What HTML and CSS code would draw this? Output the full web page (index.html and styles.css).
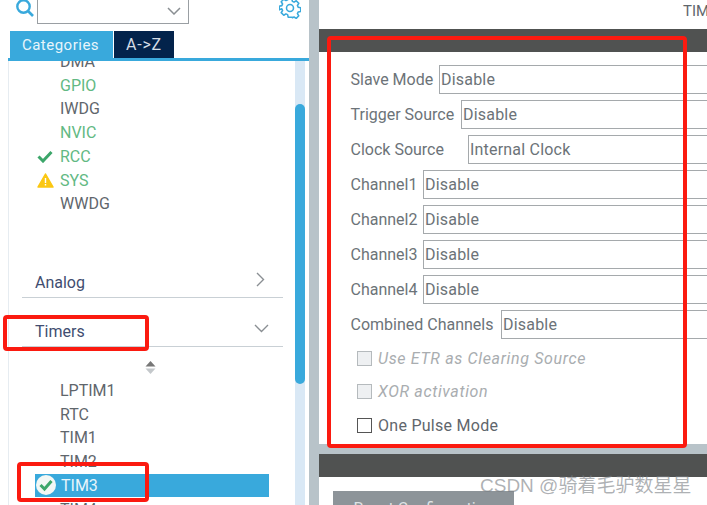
FILE: index.html
```html
<!DOCTYPE html>
<html lang="en">
<head>
    <meta charset="UTF-8">
    <title>TIM3 Mode and Configuration</title>
    <link rel="stylesheet" href="styles.css">
</head>
<body>
<div id="app">
    <div class="left">
        <div class="search">
            <svg class="search-icon" width="20" height="20" viewBox="0 0 20 20"><circle cx="8.5" cy="7.5" r="6.2" fill="none" stroke="#39a9dc" stroke-width="2.4"/><path d="M13 12l5 5" stroke="#39a9dc" stroke-width="2.6" fill="none"/></svg>
            <div class="search-box">
                <svg width="14" height="8" viewBox="0 0 14 8"><path d="M1 1l6 6 6-6" fill="none" stroke="#8a8f93" stroke-width="1.5"/></svg>
            </div>
            <svg class="gear" width="22" height="22" viewBox="0 0 24 24"><path d="M10 2h4l.6 2.8 1.8.8 2.4-1.5 2.8 2.8-1.5 2.4.8 1.8 2.8.6v4l-2.8.6-.8 1.8 1.5 2.4-2.8 2.8-2.4-1.5-1.8.8L14 22h-4l-.6-2.8-1.8-.8-2.4 1.5-2.8-2.8 1.5-2.4-.8-1.8L.3 14v-4l2.8-.6.8-1.8-1.5-2.4 2.8-2.8 2.4 1.5 1.8-.8z" fill="none" stroke="#39a9dc" stroke-width="1.7" stroke-linejoin="round"/><circle cx="12" cy="12" r="3.8" fill="none" stroke="#39a9dc" stroke-width="1.7"/></svg>
        </div>
        <div class="tabs">
            <span class="tab active">Categories</span>
            <span class="tab">A-&gt;Z</span>
        </div>
        <div class="tab-line"></div>
        <div class="tree">
            <div class="tree-body">
                <ul class="items first">
                    <li><i class="slot"></i>DMA</li>
                    <li class="ok"><i class="slot"></i>GPIO</li>
                    <li><i class="slot"></i>IWDG</li>
                    <li class="ok"><i class="slot"></i>NVIC</li>
                    <li class="ok"><i class="slot"><svg width="16" height="13" viewBox="0 0 16 13"><path d="M1.5 6.5l4.5 4.5 8.5-9" fill="none" stroke="#3ca66a" stroke-width="3"/></svg></i>RCC</li>
                    <li class="ok"><i class="slot"><svg width="17" height="15" viewBox="0 0 17 15"><path d="M8.5 1L16 14H1z" fill="#fbc712" stroke="#fbc712" stroke-width="1.5" stroke-linejoin="round"/><path d="M8.5 5v5M8.5 11v1.6" stroke="#fff" stroke-width="1.4"/></svg></i>SYS</li>
                    <li><i class="slot"></i>WWDG</li>
                </ul>
                <div class="group analog">Analog
                    <svg width="9" height="15" viewBox="0 0 9 15"><path d="M1 1l6.5 6.5L1 14" fill="none" stroke="#8a8f93" stroke-width="1.4"/></svg>
                </div>
                <div class="group timers">Timers
                    <svg width="15" height="9" viewBox="0 0 15 9"><path d="M1 1l6.5 6.5L14 1" fill="none" stroke="#8a8f93" stroke-width="1.4"/></svg>
                </div>
                <div class="sort">
                    <svg width="11" height="13" viewBox="0 0 11 13"><path d="M5.5 0L10.5 5.500H.5z" fill="#777"/><path d="M.5 7.500h10L5.500 13z" fill="#c4c8cb"/></svg>
                </div>
                <ul class="items">
                    <li><i class="slot"></i>LPTIM1</li>
                    <li><i class="slot"></i>RTC</li>
                    <li><i class="slot"></i>TIM1</li>
                    <li><i class="slot"></i>TIM2</li>
                    <li class="selected"><i class="slot"><svg width="20" height="20" viewBox="0 0 20 20"><circle cx="10" cy="10" r="10" fill="#f2f7f5"/><path d="M4.500 10l4 4 7-8" fill="none" stroke="#3ca66a" stroke-width="3"/></svg></i>TIM3</li>
                    <li><i class="slot"></i>TIM4</li>
                </ul>
            </div>
            <div class="scrollbar"><div class="thumb"></div></div>
        </div>
    </div>
    <div class="divider"></div>
    <div class="right">
        <div class="title">TIM3 Mode and Configuration</div>
        <div class="bar"></div>
        <div class="form">
            <div class="row"><label class="w-slave">Slave Mode</label><div class="select">Disable</div></div>
            <div class="row"><label class="w-trigger">Trigger Source</label><div class="select">Disable</div></div>
            <div class="row"><label class="w-clock">Clock Source</label><div class="select">Internal Clock</div></div>
            <div class="row"><label class="w-channel">Channel1</label><div class="select">Disable</div></div>
            <div class="row"><label class="w-channel">Channel2</label><div class="select">Disable</div></div>
            <div class="row"><label class="w-channel">Channel3</label><div class="select">Disable</div></div>
            <div class="row"><label class="w-channel">Channel4</label><div class="select">Disable</div></div>
            <div class="row last"><label class="w-combined">Combined Channels</label><div class="select">Disable</div></div>
            <div class="check off"><span class="box"></span>Use ETR as Clearing Source</div>
            <div class="check off"><span class="box"></span>XOR activation</div>
            <div class="check"><span class="box"></span>One Pulse Mode</div>
        </div>
        <div class="bar second"></div>
        <div class="footer"><span class="reset">Reset Configuration</span></div>
    </div>
</div>
<div class="mark mark-form"></div>
<div class="mark mark-timers"></div>
<div class="mark mark-tim3"></div>
<div class="watermark">CSDN @骑着毛驴数星星</div>
</body>
</html>
```

FILE: styles.css
```css
*{
    margin: 0;
    padding: 0;
    box-sizing: border-box;
}
html,body{
    height: 505px;
    overflow: hidden;
}
body{
    font-family: Roboto, "Liberation Sans", sans-serif;
    font-size: 16px;
    color: #5f666c;
    background: #fff;
    position: relative;
}
li{
    list-style: none;
}
#app{
    display: flex;
    height: 505px;
}

/* left pane */
.left{
    width: 309px;
    height: 505px;
    overflow: hidden;
}
.search{
    display: flex;
    height: 31px;
    padding-left: 15px;
    align-items: flex-start;
}
.search-icon{
    margin-top: -1px;
    flex: none;
}
.search-box{
    width: 152px;
    height: 25px;
    margin-left: 2px;
    margin-top: -1px;
    border: 1px solid #9a9fa3;
    border-width: 0 1px 1px 1px;
    display: flex;
    justify-content: flex-end;
    align-items: center;
    padding-right: 7px;
}
.gear{
    margin-left: 90px;
    margin-top: -3px;
}
.tabs{
    display: flex;
    height: 27px;
    padding-left: 10px;
    gap: 1px;
}
.tab{
    width: 60px;
    line-height: 28px;
    text-align: center;
    background: #03234b;
    color: #d5dde6;
    letter-spacing: 0.8px;
}
.tab.active{
    width: 103px;
    padding-right: 2px;
    background: #39a9dc;
    color: #e8f5fb;
    font-size: 15px;
    letter-spacing: 0.5px;
}
.tab-line{
    height: 3px;
    margin-left: 8px;
    background: #39a9dc;
}
.tree{
    display: flex;
    height: 444px;
    margin-left: 8px;
    border-left: 1px solid #e6ecf1;
    padding-right: 4px;
    overflow: hidden;
}
.tree-body{
    flex: 1;
    min-width: 0;
}
.scrollbar{
    width: 10px;
    height: 444px;
    background: #d9e8f5;
    padding-top: 43px;
    flex: none;
}
.thumb{
    height: 280px;
    background: #39a9dc;
    border-radius: 5px;
}
.items li{
    display: flex;
    align-items: center;
    height: 23.75px;
    width: 234px;
    margin-left: 26px;
    white-space: nowrap;
}
.items.first{
    margin-top: -11.5px;
}
.items li.ok{
    color: #62b983;
}
.items li.selected{
    background: #39a9dc;
    color: #e8f5fb;
}
.slot{
    width: 25px;
    flex: none;
    display: flex;
    align-items: center;
    padding-left: 2px;
}
.selected .slot{
    width: 26px;
    padding-left: 1px;
}
.group{
    display: flex;
    justify-content: space-between;
    align-items: center;
    height: 30px;
    margin-left: 13px;
    margin-right: 12px;
    padding: 0 18px 0 13px;
    border-bottom: 1px solid #c9d0d5;
    color: #414d70;
}
.group svg{
    margin-top: -6px;
}
.analog{
    margin-top: 52.25px;
}
.timers{
    margin-top: 19px;
    padding-right: 14px;
}
.sort{
    height: 31.5px;
    padding: 14px 0 0 136px;
}
.sort svg{
    display: block;
}

/* right pane */
.divider{
    width: 10px;
    background: #b8c3c9;
    flex: none;
}
.right{
    flex: 1;
    min-width: 0;
    overflow: hidden;
    background: #b8c3c9;
}
.title{
    height: 29px;
    background: #fff;
    white-space: nowrap;
    padding: 2px 0 0 364px;
    font-size: 15px;
}
.bar{
    height: 23px;
    background: #505251;
}
.form{
    height: 392px;
    background: #fff;
    padding: 13px 0 0 31px;
    margin-bottom: 10px;
}
.row{
    display: flex;
    gap: 6px;
    height: 29px;
    margin-bottom: 6px;
    margin-right: -20px;
    align-items: center;
    color: #6c7378;
}
.row.last{
    margin-bottom: 2.5px;
}
.row label{
    flex: none;
    padding-left: 0.5px;
    white-space: nowrap;
}
.w-slave{
    width: 83px;
}
.w-trigger{
    width: 105px;
}
.w-clock{
    width: 112px;
}
.w-channel{
    width: 67px;
}
.w-combined{
    width: 145px;
}
.select{
    flex: 1;
    height: 29px;
    line-height: 27px;
    padding-left: 1px;
    border: 1px solid #a5a9ac;
    letter-spacing: 0.2px;
}
.check{
    display: flex;
    align-items: center;
    height: 33.5px;
    padding-left: 7px;
    letter-spacing: 0.27px;
}
.box{
    width: 15px;
    height: 15px;
    margin-right: 6px;
    border: 1px solid #555;
}
.check.off{
    font-style: italic;
    color: #a9adb0;
    letter-spacing: 0.65px;
}
.check.off .box{
    background: #eef0f2;
    border-color: #b5babd;
}
.footer{
    height: 28px;
    background: #fff;
    padding: 14px 0 0 14px;
    overflow: hidden;
}
.reset{
    display: block;
    width: 181px;
    height: 32px;
    line-height: 36px;
    text-align: center;
    background: #8d9499;
    color: #dfe3e5;
}

/* red annotation boxes drawn over the screenshot */
.mark{
    position: absolute;
    border: 4px solid #fb1a10;
    border-radius: 4px;
}
.mark-form{
    left: 327px;
    top: 36px;
    width: 360px;
    height: 412px;
}
.mark-timers{
    left: 3px;
    top: 315px;
    width: 146px;
    height: 36px;
}
.mark-tim3{
    left: 17px;
    top: 462px;
    width: 132px;
    height: 40px;
}
.watermark{
    position: absolute;
    left: 480px;
    top: 474px;
    font-family: "Liberation Sans", "Noto Sans CJK SC", sans-serif;
    font-size: 19px;
    line-height: 24px;
    color: rgba(120, 125, 130, 0.6);
    white-space: nowrap;
}
```
